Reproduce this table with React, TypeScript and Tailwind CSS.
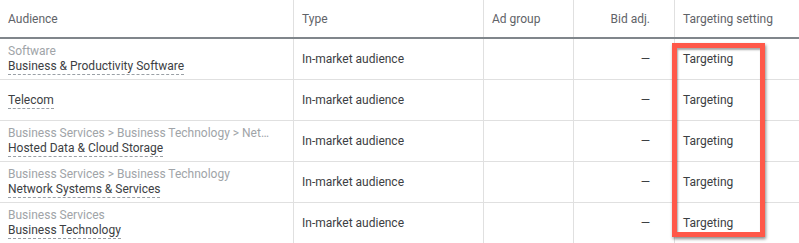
const rows = [
  { cat: "Software", name: "Business & Productivity Software" },
  { cat: "", name: "Telecom" },
  { cat: "Business Services > Business Technology > Net…", name: "Hosted Data & Cloud Storage" },
  { cat: "Business Services > Business Technology", name: "Network Systems & Services" },
  { cat: "Business Services", name: "Business Technology" },
];

const cols = "grid grid-cols-[294px_190px_90px_101px_1fr]";

export default function App() {
  return (
    <div className="relative w-[799px] h-[243px] overflow-hidden bg-white font-['Roboto',sans-serif] text-[12px]">
      <div className={`${cols} h-[39px] border-b-2 border-[#80868b] text-[#5f6368]`}>
        <div className="flex items-center px-2 border-r border-[#e0e0e0]">Audience</div>
        <div className="flex items-center px-2 border-r border-[#e0e0e0]">Type</div>
        <div className="flex items-center px-2 border-r border-[#e0e0e0]">Ad group</div>
        <div className="flex items-center justify-end pr-6 border-r border-[#e0e0e0]">Bid adj.</div>
        <div className="flex items-center px-2">Targeting setting</div>
      </div>
      {rows.map((r) => (
        <div key={r.name} className={`${cols} h-[41px] border-b border-[#e0e0e0] text-[#3c4043]`}>
          <div className="flex flex-col justify-center px-2 pt-px border-r border-[#e0e0e0] leading-[15px]">
            {r.cat && <span className="text-[#a0a4a8] whitespace-nowrap">{r.cat}</span>}
            <span className="self-start border-b border-dashed border-[#9aa0a6] leading-[15px]">{r.name}</span>
          </div>
          <div className="flex items-center px-2 border-r border-[#e0e0e0]">In-market audience</div>
          <div className="border-r border-[#e0e0e0]" />
          <div className="flex items-center justify-end pr-6 border-r border-[#e0e0e0]">—</div>
          <div className="flex items-center px-2">Targeting</div>
        </div>
      ))}
      <div className="absolute left-[672px] top-[43px] w-[93px] h-[194px] border-[5px] border-[#ff5849] shadow-[1px_2px_3px_rgba(0,0,0,0.45),inset_1px_2px_2px_rgba(0,0,0,0.35)]" />
    </div>
  );
}
